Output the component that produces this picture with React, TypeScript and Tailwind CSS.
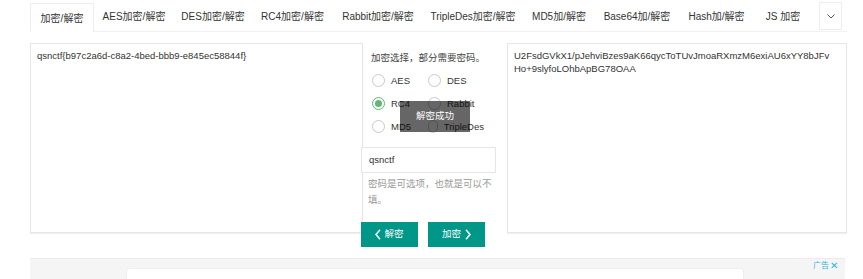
import React from 'react'

const tabs = [
  { label: '加密/解密', w: 'w-[64px]', active: true },
  { label: 'AES加密/解密', w: 'w-[80px]' },
  { label: 'DES加密/解密', w: 'w-[78px]' },
  { label: 'RC4加密/解密', w: 'w-[81px]' },
  { label: 'Rabbit加密/解密', w: 'w-[90px]' },
  { label: 'TripleDes加密/解密', w: 'w-[100px]' },
  { label: 'MD5加/解密', w: 'w-[72px]' },
  { label: 'Base64加/解密', w: 'w-[84px]' },
  { label: 'Hash加/解密', w: 'w-[75px]' },
  { label: 'JS 加密', w: 'w-[58px]' },
]

const algos = [
  { name: 'AES' },
  { name: 'DES' },
  { name: 'RC4', checked: true },
  { name: 'Rabbit' },
  { name: 'MD5' },
  { name: 'TripleDes' },
]

function Radio({ name, checked }: { name: string; checked?: boolean }) {
  return (
    <label className="flex items-center gap-[6px] h-[13px] cursor-pointer">
      {checked ? (
        <span className="flex items-center justify-center size-[13px] rounded-full border border-[#5fb878]">
          <span className="size-[7px] rounded-full bg-[#5fb878]" />
        </span>
      ) : (
        <span className="size-[13px] rounded-full border border-[#c9c9c9]" />
      )}
      <span className="text-[9.5px] leading-[13px] text-[#333]">{name}</span>
    </label>
  )
}

function Chevron({ dir }: { dir: 'left' | 'right' }) {
  return (
    <svg width="6" height="11" viewBox="0 0 6 11" fill="none">
      <path
        d={dir === 'left' ? 'M5 0.8 L1 5.5 L5 10.2' : 'M1 0.8 L5 5.5 L1 10.2'}
        stroke="white"
        strokeWidth="1.5"
      />
    </svg>
  )
}

export default function App() {
  return (
    <div className="w-[863px] h-[279px] overflow-hidden bg-white font-['Liberation_Sans','Noto_Sans_CJK_SC',sans-serif] text-[#333]">
      {/* tab bar */}
      <div className="ml-[30px] w-[817px] pt-[2px] flex items-end border-b border-[#f2f2f2]">
        {tabs.map((t) => (
          <div
            key={t.label}
            className={
              t.active
                ? `${t.w} h-[29px] -mb-px flex items-center justify-center border border-b-0 border-[#eee] bg-white text-[10px] whitespace-nowrap`
                : `${t.w} h-[29px] flex items-center justify-center text-[10px] whitespace-nowrap`
            }
          >
            {t.label}
          </div>
        ))}
        <div className="ml-[7px] mb-px w-[23px] h-[28px] flex items-center justify-center border border-[#eee] bg-white">
          <svg width="8" height="5" viewBox="0 0 8 5" fill="none">
            <path d="M0.5 0.5 L4 4 L7.5 0.5" stroke="#555" strokeWidth="1" />
          </svg>
        </div>
      </div>

      {/* editor row */}
      <div className="mt-[11px] ml-[30px] flex items-start">
        <div className="w-[333px] h-[190px] border border-[#e6e6e6] shadow-[0_1px_1px_rgba(0,0,0,0.06)] px-[6px] py-[6px] text-[9.5px] leading-[12.5px]">
          qsnctf{'{'}b97c2a6d-c8a2-4bed-bbb9-e845ec58844f{'}'}
        </div>

        <div className="relative -ml-[2px] w-[146px] flex flex-col">
          <div className="mt-[8px] pl-[10px] h-[13px] text-[9.5px] leading-[13px] text-[#444] whitespace-nowrap">
            加密选择，部分需要密码。
          </div>
          <div className="mt-[10px] pl-[11px] grid grid-cols-[56px_56px] gap-y-[10px]">
            {algos.map((a) => (
              <Radio key={a.name} name={a.name} checked={a.checked} />
            ))}
          </div>
          <div className="mt-[14px] w-[135px] h-[26px] border border-[#e6e6e6] bg-white pl-[7px] flex items-center text-[9.5px]">
            qsnctf
          </div>
          <div className="mt-[3px] w-[135px] pl-[7px] pr-[2px] text-[9.5px] leading-[16px] text-[#999]">
            密码是可选项，也就是可以不填。
          </div>
          <div className="mt-[14px] flex gap-[10px]">
            <button className="w-[57px] h-[25px] bg-[#009688] text-white text-[9.5px] flex items-center justify-center gap-[3px]">
              <Chevron dir="left" />
              <span>解密</span>
            </button>
            <button className="w-[57px] h-[25px] bg-[#009688] text-white text-[9.5px] flex items-center justify-center gap-[4px]">
              <span>加密</span>
              <Chevron dir="right" />
            </button>
          </div>

          <div className="absolute left-[39px] top-[58px] w-[70px] h-[31px] bg-[rgba(0,0,0,0.6)] text-white text-[9.5px] flex items-center justify-center">
            解密成功
          </div>
        </div>

        <div className="w-[340px] h-[190px] border border-[#e6e6e6] shadow-[0_1px_1px_rgba(0,0,0,0.06)] px-[6px] py-[6px] text-[9.5px] leading-[12.5px]">
          U2FsdGVkX1/pJehviBzes9aK66qycToTUvJmoaRXmzM6exiAU6xYY8bJFv
          <br />
          Ho+9slyfoLOhbApBG78OAA
        </div>
      </div>

      {/* ad area */}
      <div className="relative mt-[11px] ml-[30px] w-[815px] h-[30px] bg-[#f5f5f5] border-t border-[#ececec]">
        <div className="ml-[96px] mt-[9px] w-[618px] h-[30px] bg-white border border-[#eee] rounded-[3px]" />
        <div className="absolute right-[7px] top-[2px] flex items-center gap-[1px] text-[8px] leading-[10px] text-[#2fb4dc]">
          <span>广告</span>
          <span className="text-[10px]">✕</span>
        </div>
      </div>
    </div>
  )
}
